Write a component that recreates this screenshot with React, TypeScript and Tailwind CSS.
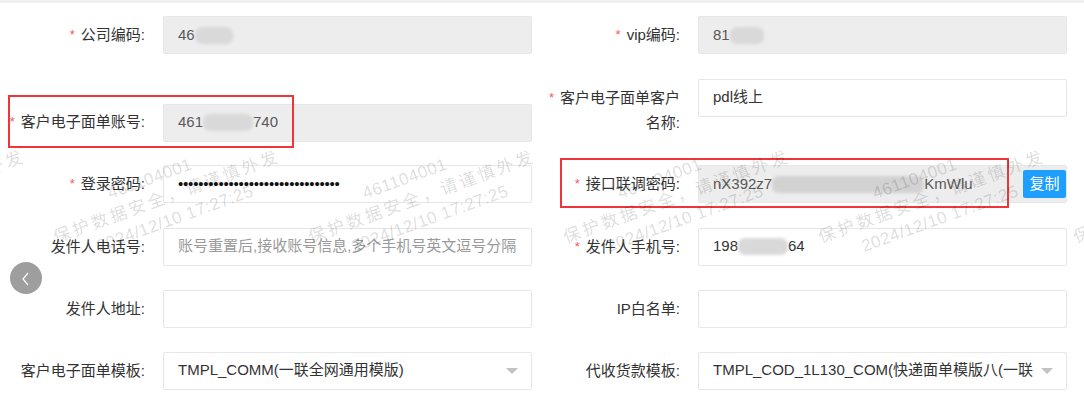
import React from 'react';

type Cell = {
  label: React.ReactNode;
  required?: boolean;
  disabled?: boolean;
  select?: boolean;
  bottom?: boolean;
  value?: React.ReactNode;
  placeholder?: string;
  copy?: boolean;
};

// mosaic bits where the screenshot hides digits
function Blur({ w, tone = 'bg-[#d9d9d9]' }: { w: number; tone?: string }) {
  return (
    <span
      className={`inline-block h-[17px] align-middle rounded-[7px] blur-[1.5px] ${tone}`}
      style={{ width: w }}
    />
  );
}

function Star() {
  return <span className="text-[#f25b5b] text-[13px] mr-[6px] relative -top-[1px]">*</span>;
}

function Field({ cell }: { cell: Cell }) {
  return (
    <div className={`flex ${cell.bottom ? 'items-end' : 'items-start'}`}>
      <div className="w-[163px] shrink-0 pr-[18px] py-[7px] text-right leading-6 text-[15px] text-[#333]">
        {cell.required && <Star />}
        {cell.label}
      </div>
      <div
        className={`h-[38px] w-[369px] shrink-0 flex items-center border border-[#e6e6e6] rounded-[2px] pl-[14px] text-[15px] whitespace-nowrap ${
          cell.disabled ? 'bg-[#ededed] text-[#595959]' : 'bg-white text-[#333]'
        }`}
      >
        <span className="flex-1 min-w-0 overflow-hidden flex items-center">
          {cell.value ? cell.value : <span className="text-[#9a9a9a]">{cell.placeholder}</span>}
        </span>
        {cell.select && (
          <span className="shrink-0 ml-[5px] mr-[13px] w-0 h-0 border-l-[6px] border-r-[6px] border-t-[6px] border-l-transparent border-r-transparent border-t-[#c2c2c2]" />
        )}
        {cell.copy && (
          <span className="shrink-0 ml-[6px] h-[28px] w-[43px] rounded-[2px] bg-[#1e9fff] text-white text-[15px] flex items-center justify-center">
            复制
          </span>
        )}
      </div>
    </div>
  );
}

const rows: [Cell, Cell][] = [
  [
    { label: '公司编码:', required: true, disabled: true, value: <>46<Blur w={38} /></> },
    { label: 'vip编码:', required: true, disabled: true, value: <>81<Blur w={34} /></> },
  ],
  [
    {
      label: '客户电子面单账号:',
      required: true,
      disabled: true,
      bottom: true,
      value: <>461<Blur w={50} />740</>,
    },
    {
      label: <>客户电子面单客户<br />名称:</>,
      required: true,
      value: 'pdl线上',
    },
  ],
  [
    {
      label: '登录密码:',
      required: true,
      value: (
        <span className="text-[#111] text-[15px] tracking-[-0.2px]">
          {'•'.repeat(32)}
        </span>
      ),
    },
    {
      label: '接口联调密码:',
      required: true,
      disabled: true,
      copy: true,
      value: (
        <>
          nX392z7<Blur w={152} tone="bg-[#d2d2d2]" />KmWlu
        </>
      ),
    },
  ],
  [
    { label: '发件人电话号:', placeholder: '账号重置后,接收账号信息,多个手机号英文逗号分隔' },
    { label: '发件人手机号:', required: true, value: <>198<Blur w={50} />64</> },
  ],
  [
    { label: '发件人地址:' },
    { label: 'IP白名单:' },
  ],
  [
    { label: '客户电子面单模板:', select: true, value: 'TMPL_COMM(一联全网通用模版)' },
    { label: '代收货款模板:', select: true, value: 'TMPL_COD_1L130_COM(快递面单模版八(一联' },
  ],
];

const tiles = [-88, 167, 422, 677, 932, 1187];

export default function App() {
  return (
    <div
      className="relative w-[1084px] h-[397px] overflow-hidden bg-white"
      style={{ fontFamily: '"Liberation Sans", "Noto Sans CJK SC", sans-serif' }}
    >
      <div className="h-[3px] bg-[#f0f0f0]" />
      <div className="pt-[13px] grid grid-cols-[532px_532px] gap-x-[3px] gap-y-[23.5px]">
        {rows.map((r, i) => (
          <React.Fragment key={i}>
            <Field cell={r[0]} />
            <Field cell={r[1]} />
          </React.Fragment>
        ))}
      </div>

      {/* annotation boxes */}
      <div className="absolute left-[8px] top-[95px] w-[286px] h-[53px] border-2 border-[#ef3535]" />
      <div className="absolute left-[560px] top-[158px] w-[449px] h-[50px] border-2 border-[#ef3535]" />

      {/* watermark */}
      <div className="absolute inset-0 pointer-events-none">
        {tiles.map((x) => (
          <div
            key={x}
            className="absolute top-[197px] -translate-x-1/2 -translate-y-1/2 -rotate-20 text-center text-[17px] leading-[23px] text-[rgba(0,0,0,0.15)] whitespace-nowrap"
            style={{ left: x }}
          >
            <div className="tracking-[0.5px] -ml-[20px]">461104001</div>
            <div className="tracking-[3px]">保护数据安全，请谨慎外发</div>
            <div className="tracking-[0.5px]">2024/12/10 17:27:25</div>
          </div>
        ))}
      </div>

      {/* side pager */}
      <div className="absolute left-[10px] top-[262px] w-[32px] h-[32px] rounded-full bg-[rgba(0,0,0,0.38)]">
        <svg width="32" height="32" viewBox="0 0 32 32">
          <path d="M18 11 L13 17 L18 23" fill="none" stroke="#fff" strokeWidth="1.2" />
        </svg>
      </div>
    </div>
  );
}
